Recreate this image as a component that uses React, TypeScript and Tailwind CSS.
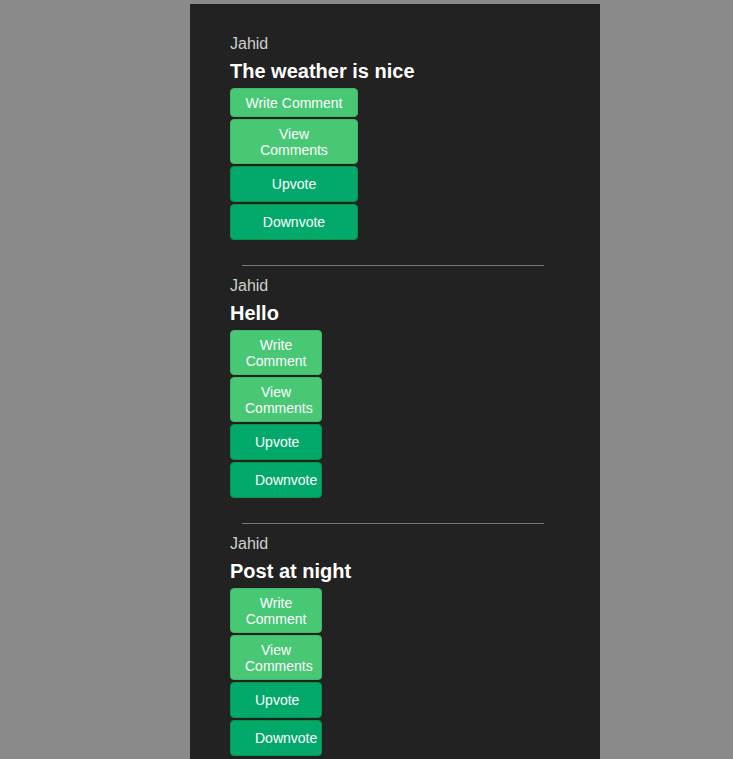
import React from "react";

type Post = { author: string; title: string; wide?: boolean };

const posts: Post[] = [
  { author: "Jahid", title: "The weather is nice", wide: true },
  { author: "Jahid", title: "Hello" },
  { author: "Jahid", title: "Post at night" },
];

const LightButton = ({ label }: { label: string }) => {
  return (
    <button className="rounded-[4px] border border-[#3fbb69] bg-[#48c774] px-[14px] pt-[6px] pb-[5px] text-center text-[14px] leading-[16px] text-white">
      {label}
    </button>
  );
};

const DarkButton = ({ label }: { label: string }) => {
  return (
    <button className="rounded-[4px] border border-[#0a9444] bg-[#03a96b] px-6 py-[9px] text-center text-[14px] leading-[16px] text-white">
      {label}
    </button>
  );
};

const PostCard = ({ post }: { post: Post }) => {
  return (
    <div>
      <div className="text-[16px] leading-[24px] text-[#cfcfcf]">{post.author}</div>
      <h2 className="text-[20px] font-bold leading-[30px] text-white">{post.title}</h2>
      <div className={`mt-[2px] flex flex-col gap-[2px] ${post.wide ? "w-[128px]" : "w-[92px]"}`}>
        <LightButton label="Write Comment" />
        <LightButton label="View Comments" />
        <DarkButton label="Upvote" />
        <DarkButton label="Downvote" />
      </div>
    </div>
  );
};

export default function App() {
  return (
    <div className="min-h-screen bg-[#8a8a8a] pt-[4px]" style={{ fontFamily: '"Liberation Sans", Arial, sans-serif' }}>
      <div className="ml-[190px] min-h-[755px] w-[410px] bg-[#222222] px-10 pt-[28px] pb-10">
        {posts.map((post, i) => (
          <div key={i}>
            {i > 0 && <div className="mt-[25px] mb-[8px] ml-[12px] h-px w-[302px] bg-[#777777]" />}
            <PostCard post={post} />
          </div>
        ))}
      </div>
    </div>
  );
}
